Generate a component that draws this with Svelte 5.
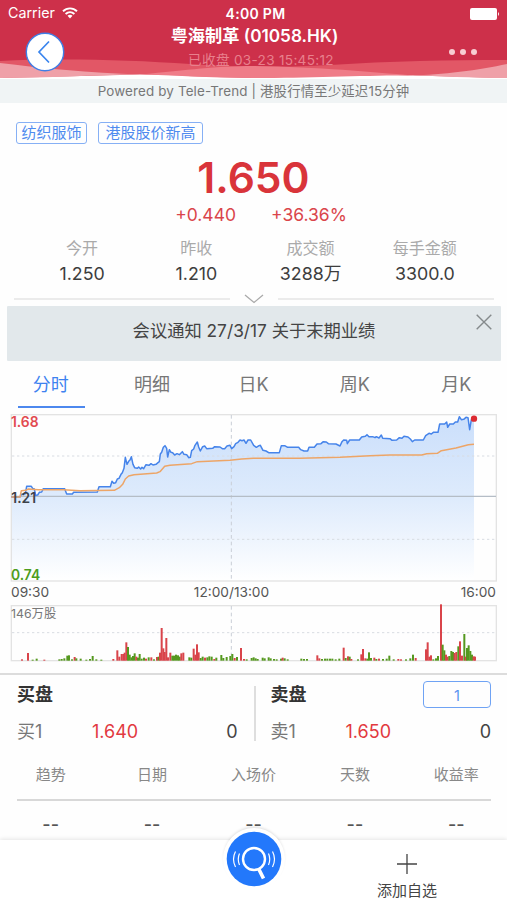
<script>
  const tags = ['纺织服饰', '港股股价新高']

  const stats = [
    { label: '今开', value: '1.250' },
    { label: '昨收', value: '1.210' },
    { label: '成交额', value: '3288万' },
    { label: '每手金额', value: '3300.0' },
  ]

  const tabs = ['分时', '明细', '日K', '周K', '月K']
  const columns = ['趋势', '日期', '入场价', '天数', '收益率']

  let activeTab = $state('分时')
  let showNotice = $state(true)

  // charts are drawn on a grid of 3 units per css pixel
  const price = [
    [34, 276], [60, 276], [64, 268], [76, 266], [80, 244], [94, 244], [98, 250], [103, 252], [107, 271],
    [113, 270], [118, 262], [125, 261], [130, 251], [194, 251], [200, 267], [217, 267], [221, 262],
    [292, 261], [297, 245], [331, 245], [336, 229], [341, 235], [347, 233], [352, 222], [357, 220],
    [363, 208], [367, 203], [372, 190], [376, 157], [381, 178], [386, 169], [390, 165], [394, 155],
    [399, 178], [404, 188], [412, 190], [416, 186], [422, 192], [426, 187], [431, 191], [438, 179],
    [447, 181], [453, 176], [459, 180], [468, 178], [474, 173], [478, 170], [481, 147], [485, 142],
    [490, 127], [495, 122], [500, 130], [503, 156], [508, 134], [513, 142], [518, 143], [524, 150],
    [531, 146], [538, 149], [547, 140], [552, 148], [560, 149], [566, 158], [571, 157], [575, 137],
    [581, 132], [585, 121], [592, 111], [596, 126], [601, 138], [608, 125], [614, 123], [620, 131],
    [638, 130], [644, 125], [660, 126], [667, 131], [674, 131], [681, 123], [690, 121], [695, 131],
    [702, 125], [707, 116], [714, 112], [720, 105], [726, 107], [732, 105], [738, 115], [744, 105],
    [752, 105], [761, 121], [769, 127], [777, 122], [781, 121], [789, 136], [798, 138], [806, 143],
    [838, 143], [844, 122], [854, 122], [863, 127], [896, 127], [902, 134], [912, 138], [923, 138],
    [927, 127], [943, 127], [951, 117], [963, 116], [970, 110], [979, 111], [985, 116], [1008, 117],
    [1020, 123], [1026, 110], [1031, 105], [1040, 106], [1042, 116], [1049, 105], [1078, 105],
    [1085, 96], [1096, 94], [1101, 89], [1107, 95], [1118, 95], [1125, 98], [1129, 95], [1137, 99],
    [1144, 90], [1148, 100], [1170, 101], [1176, 106], [1190, 105], [1198, 98], [1206, 100],
    [1212, 94], [1224, 96], [1231, 102], [1237, 110], [1244, 105], [1270, 105], [1277, 92],
    [1287, 85], [1294, 87], [1300, 82], [1314, 82], [1319, 57], [1334, 57], [1340, 51], [1343, 67],
    [1349, 57], [1360, 57], [1366, 51], [1373, 51], [1378, 35], [1384, 44], [1391, 43], [1398, 37],
    [1404, 38], [1409, 74], [1414, 44], [1422, 42],
  ]

  const average = [
    [34, 276], [60, 276], [64, 257], [78, 256], [84, 252], [115, 254], [190, 254], [240, 257],
    [343, 256], [358, 248], [368, 238], [376, 222], [386, 213], [402, 209], [470, 204], [480, 200],
    [494, 184], [510, 181], [575, 176], [592, 170], [690, 166], [725, 162], [760, 160], [900, 160],
    [1020, 157], [1110, 152], [1170, 150], [1265, 150], [1280, 146], [1312, 145], [1324, 137],
    [1368, 129], [1405, 119], [1422, 118],
  ]

  // x, height, r(ise) / f(all)
  const volume = [
    [66, 4, 'r'], [84, 23, 'r'], [98, 3, 'f'], [110, 6, 'f'], [133, 3, 'r'], [178, 4, 'f'], [185, 5, 'f'],
    [193, 7, 'f'], [202, 15, 'f'], [207, 16, 'f'], [216, 4, 'f'], [224, 11, 'r'], [229, 7, 'f'],
    [242, 6, 'f'], [259, 3, 'f'], [270, 5, 'f'], [278, 14, 'f'], [289, 4, 'f'], [304, 3, 'f'],
    [340, 5, 'r'], [352, 31, 'r'], [358, 12, 'r'], [365, 20, 'r'], [370, 20, 'r'], [374, 24, 'r'],
    [379, 55, 'r'], [384, 41, 'f'], [389, 18, 'f'], [394, 10, 'f'], [399, 14, 'f'], [404, 22, 'f'],
    [409, 12, 'r'], [414, 9, 'f'], [419, 20, 'f'], [425, 6, 'f'], [432, 9, 'f'], [438, 6, 'r'],
    [446, 10, 'f'], [454, 10, 'r'], [462, 4, 'f'], [471, 11, 'r'], [476, 12, 'f'], [480, 24, 'r'],
    [485, 98, 'r'], [490, 37, 'r'], [494, 26, 'r'], [499, 68, 'r'], [504, 10, 'r'], [511, 24, 'r'],
    [517, 15, 'f'], [522, 15, 'f'], [528, 18, 'f'], [534, 16, 'f'], [539, 12, 'f'], [544, 22, 'r'],
    [550, 24, 'r'], [568, 10, 'f'], [574, 9, 'f'], [581, 36, 'r'], [586, 18, 'r'], [591, 49, 'r'],
    [596, 25, 'r'], [602, 8, 'f'], [608, 12, 'f'], [615, 9, 'r'], [622, 10, 'f'], [628, 13, 'f'],
    [635, 12, 'f'], [643, 5, 'r'], [649, 9, 'f'], [664, 17, 'f'], [670, 8, 'f'], [680, 11, 'f'],
    [691, 14, 'f'], [697, 20, 'f'], [704, 8, 'r'], [711, 11, 'f'], [723, 38, 'r'], [732, 5, 'r'],
    [740, 4, 'f'], [755, 8, 'f'], [761, 10, 'f'], [767, 7, 'f'], [773, 5, 'f'], [788, 9, 'f'],
    [794, 7, 'f'], [806, 10, 'f'], [812, 7, 'f'], [822, 5, 'f'], [830, 4, 'f'], [843, 6, 'f'],
    [848, 9, 'r'], [854, 7, 'f'], [863, 4, 'f'], [904, 6, 'f'], [912, 5, 'f'], [921, 5, 'f'],
    [952, 16, 'r'], [958, 7, 'r'], [966, 5, 'f'], [975, 6, 'f'], [982, 6, 'f'], [990, 6, 'f'],
    [997, 6, 'f'], [1007, 4, 'f'], [1018, 6, 'f'], [1031, 39, 'r'], [1037, 8, 'f'], [1044, 13, 'r'],
    [1049, 12, 'f'], [1054, 5, 'r'], [1074, 4, 'f'], [1084, 19, 'r'], [1089, 35, 'r'], [1096, 7, 'r'],
    [1102, 6, 'f'], [1107, 25, 'f'], [1113, 8, 'f'], [1123, 9, 'r'], [1129, 5, 'f'], [1137, 6, 'r'],
    [1149, 5, 'f'], [1160, 6, 'f'], [1168, 15, 'f'], [1181, 4, 'f'], [1195, 5, 'r'], [1203, 4, 'r'],
    [1218, 4, 'f'], [1231, 7, 'f'], [1239, 18, 'f'], [1247, 8, 'r'], [1278, 34, 'r'], [1283, 55, 'r'],
    [1288, 12, 'r'], [1293, 16, 'r'], [1300, 4, 'f'], [1308, 7, 'f'], [1314, 14, 'f'], [1323, 169, 'r'],
    [1328, 48, 'f'], [1333, 31, 'f'], [1338, 18, 'r'], [1343, 12, 'r'], [1348, 14, 'f'], [1354, 29, 'f'],
    [1359, 26, 'f'], [1364, 23, 'r'], [1369, 26, 'r'], [1375, 43, 'f'], [1380, 58, 'r'], [1386, 15, 'r'],
    [1393, 80, 'f'], [1397, 12, 'r'], [1401, 38, 'f'], [1406, 46, 'f'], [1411, 29, 'f'], [1416, 18, 'f'],
    [1421, 13, 'r'], [1425, 12, 'r'],
  ]

  const toPath = (points) => 'M' + points.map((p) => p.join(' ')).join('L')
</script>

<main>
  <header>
    <svg class="waves" viewBox="0 0 507 79" preserveAspectRatio="none" aria-hidden="true">
      <path fill="#fff" d="M0 77L140 73H413L507 77V79H0Z" />
      <path fill="#e25766" d="M0 61C60 58 130 60 190 64C230 67 280 68 330 65C390 61 450 60 507 60V78L413 75.500C360 74 310 77 253 78C200 77 170 74.500 140 74.500L0 78Z" />
      <path fill="#ef7c88" d="M140 74.500C190 70 215 66 253 66C320 67 370 72 413 75.500C370 75 310 78 253 78C210 78 170 75 140 74.500Z" />
      <path fill="#efa0a8" d="M0 63C40 68 90 73 140 74.500C90 75 50 78 0 78Z" />
      <path fill="#efa0a8" d="M507 64C480 70 440 75 413 75.500C440 76 470 78 507 78Z" />
    </svg>
    <div class="status">
      <span class="carrier">
        Carrier
        <svg width="16" height="12" viewBox="0 0 16 12" fill="none" stroke="#fff" stroke-width="1.900">
          <path d="M1 4.300C5 .4 11 .4 15 4.300M3.600 7C6.200 4.600 9.800 4.600 12.400 7" />
          <path d="M5.500 8.800Q8 6.800 10.500 8.800L8 11.400Z" fill="#fff" stroke="none" />
        </svg>
      </span>
      <span class="clock">4:00 PM</span>
      <svg class="battery" width="30" height="12" viewBox="0 0 30 12" fill="#fff">
        <rect width="27" height="12" rx="2" />
        <path d="M28 4Q30 6 28 8Z" />
      </svg>
    </div>
    <div class="nav">
      <button class="back" aria-label="back">
        <svg width="40" height="40" viewBox="0 0 40 40" fill="none">
          <circle cx="20" cy="20" r="18.700" fill="#fff" stroke="#3f7ee6" stroke-width="1.400" />
          <path d="M24 9.500L14 20L24 30.500" stroke="#3a85ee" stroke-width="1.700" />
        </svg>
      </button>
      <div class="title">
        <h1>粤海制革 (01058.HK)</h1>
        <p>已收盘 03-23 15:45:12</p>
      </div>
      <button class="more" aria-label="more">
        <i></i><i></i><i></i>
      </button>
    </div>
  </header>

  <p class="powered">Powered by Tele-Trend | 港股行情至少延迟15分钟</p>

  <section class="quote">
    <div class="tags">
      {#each tags as tag}
        <span>{tag}</span>
      {/each}
    </div>
    <strong class="last">1.650</strong>
    <div class="change">
      <span>+0.440</span>
      <span>+36.36%</span>
    </div>
    <dl class="stats">
      {#each stats as stat}
        <div>
          <dt>{stat.label}</dt>
          <dd>{stat.value}</dd>
        </div>
      {/each}
    </dl>
    <div class="expand">
      <hr />
      <svg width="20" height="10" viewBox="0 0 20 10" fill="none" stroke="#aaa" stroke-width="1.300">
        <path d="M1 1L10 8.500L19 1" />
      </svg>
      <hr />
    </div>
  </section>

  {#if showNotice}
    <div class="notice">
      <span>会议通知 27/3/17 关于末期业绩</span>
      <button aria-label="close" onclick={() => (showNotice = false)}>
        <svg width="16" height="16" viewBox="0 0 16 16" stroke="#858a8c" stroke-width="1.400">
          <path d="M.7 .7L15.300 15.300M15.300 .7L.7 15.300" />
        </svg>
      </button>
    </div>
  {/if}

  <nav class="tabs">
    {#each tabs as tab}
      <button class:active={activeTab === tab} onclick={() => (activeTab = tab)}>{tab}</button>
    {/each}
  </nav>

  <section class="charts">
    <svg class="price-chart" viewBox="30 24 1464 507">
      <defs>
        <linearGradient id="fade" x1="0" y1="35" x2="0" y2="528" gradientUnits="userSpaceOnUse">
          <stop offset="0" stop-color="#cbdffb" />
          <stop offset=".5" stop-color="#deebfc" />
          <stop offset="1" stop-color="#fff" />
        </linearGradient>
      </defs>
      <path d="{toPath(price)}V528H34Z" fill="url(#fade)" />
      <rect class="frame" x="34" y="29" width="1455" height="499" />
      <path class="grid" d="M36 153H1486M36 403H1486" />
      <path class="grid mid" d="M694 30V528" />
      <path d="M34 274H1488" stroke="#b5bdc6" stroke-width="3.500" />
      <path class="line" d={toPath(price)} stroke="#4684ea" />
      <path class="line" d={toPath(average)} stroke="#eda567" />
      <circle cx="1422" cy="41" r="9.500" fill="#dc2b32" />
      <text x="33" y="66" fill="#e24a50">1.68</text>
      <text x="34" y="295" fill="#3c4148">1.21</text>
      <text x="33" y="525" fill="#4d9d1c">0.74</text>
    </svg>
    <div class="times">
      <span>09:30</span>
      <span>12:00/13:00</span>
      <span>16:00</span>
    </div>
    <svg class="volume-chart" viewBox="30 6 1464 183">
      <rect class="frame" x="34" y="17" width="1455" height="165" />
      <path class="grid" d="M36 98H1486" />
      <path class="grid mid" d="M694 18V182" />
      <text x="33" y="53" fill="#777">146万股</text>
      {#each volume as [x, height, side]}
        <rect class={side} x={x - 3} y={182 - height} width="6" {height} />
      {/each}
    </svg>
  </section>

  <section class="book">
    <div class="side">
      <h2>买盘</h2>
      <div class="row"><span>买1</span><em>1.640</em><b>0</b></div>
    </div>
    <div class="side">
      <h2>卖盘 <button>1</button></h2>
      <div class="row"><span>卖1</span><em>1.650</em><b>0</b></div>
    </div>
  </section>

  <section class="signals">
    <div class="head">
      {#each columns as column}
        <span>{column}</span>
      {/each}
    </div>
    <div class="values">
      {#each columns as column}
        <span>--</span>
      {/each}
    </div>
  </section>

  <footer>
    <div class="search">
      <svg width="62" height="62" viewBox="0 0 62 62" fill="none" stroke="#fff">
        <circle cx="31" cy="31" r="27.300" fill="#2378fb" stroke="none" />
        <circle cx="31" cy="31" r="11" stroke-width="2.400" />
        <path d="M36 41.500L40.500 50.500" stroke-width="3.600" />
        <path d="M16.500 25.500Q14 31 16.500 37M12.500 23.500Q8.500 31 12.500 39M45.500 25.500Q48 31 45.500 37M49.500 23.500Q53.500 31 49.500 39" stroke-width="1.200" />
      </svg>
    </div>
    <button class="add">
      <svg width="20" height="20" viewBox="0 0 20 20" stroke="#444" stroke-width="1.300">
        <path d="M10 0V20M0 10H20" />
      </svg>
      添加自选
    </button>
  </footer>
</main>

<style>
  :global(body) {
    margin: 0;
    background: #fefefe;
  }

  * {
    box-sizing: border-box;
    margin: 0;
    padding: 0;
  }

  main {
    display: flex;
    flex-direction: column;
    width: 507px;
    height: 900px;
    overflow: hidden;
    color: #444;
    font-family: Inter, 'Noto Sans CJK SC', sans-serif;
    font-size: 16px;
    line-height: 1;
  }

  svg {
    display: block;
  }

  button {
    border: 0;
    background: none;
    color: inherit;
    font: inherit;
    cursor: pointer;
  }

  header {
    position: relative;
    height: 79px;
    flex: none;
    background: linear-gradient(#cd304a 76px, #f0f4f5 76px);
    color: #fff;
  }

  .waves {
    position: absolute;
    inset: 0;
    width: 100%;
    height: 79px;
  }

  .status {
    position: relative;
    display: grid;
    grid-template-columns: 1fr auto 1fr;
    align-items: center;
    height: 27px;
    padding: 0 7px 0 8px;
    font-size: 14.300px;
  }

  .carrier {
    display: flex;
    align-items: center;
    gap: 7px;
  }

  .clock {
    margin-left: 3px;
    font-size: 14px;
    font-weight: 600;
    letter-spacing: 0.3px;
  }

  .battery {
    justify-self: end;
  }

  .nav {
    position: relative;
    display: grid;
    grid-template-columns: 100px 1fr 100px;
    align-items: start;
  }

  .back {
    width: 40px;
    margin: 5px 0 0 25px;
  }

  .title {
    text-align: center;
    white-space: nowrap;
  }

  h1 {
    height: 18px;
    padding-left: 2px;
    font-size: 17.200px;
    font-weight: 600;
    line-height: 18px;
  }

  .title p {
    margin-top: 8px;
    padding-left: 15px;
    color: #e8808d;
    font-size: 13.600px;
    line-height: 15px;
    letter-spacing: 0.3px;
  }

  .more {
    display: flex;
    justify-self: end;
    gap: 5px;
    margin: 22px 30px 0 0;
  }

  .more i {
    width: 6px;
    height: 6px;
    border-radius: 50%;
    background: #f7cdd2;
  }

  .powered {
    flex: none;
    height: 24px;
    background: #f0f4f5;
    color: #777;
    font-size: 13.400px;
    line-height: 25px;
    text-align: center;
    letter-spacing: 0.15px;
  }

  .quote {
    display: flex;
    flex-direction: column;
    flex: none;
    height: 203px;
    padding-top: 19px;
  }

  .tags {
    display: flex;
    gap: 11px;
    padding-left: 16px;
  }

  .tags span {
    height: 22px;
    padding: 0 4.500px;
    border: 1px solid #86b0f5;
    border-radius: 3px;
    color: #4f8bef;
    font-size: 15px;
    line-height: 20px;
  }

  .tags span + span {
    padding: 0 6.500px;
  }

  .last {
    margin-top: 13px;
    color: #d9343a;
    font-size: 42.500px;
    font-weight: 600;
    line-height: 42px;
    text-align: center;
  }

  .change {
    display: flex;
    justify-content: center;
    gap: 35px;
    margin: 5px 0 0 15px;
    color: #da454b;
    font-size: 17.500px;
    line-height: 22px;
  }

  .stats {
    display: grid;
    grid-template-columns: repeat(4, 1fr);
    margin-top: 12px;
    padding: 0 25px;
    text-align: center;
  }

  dt {
    color: #aaa;
    font-size: 16px;
    line-height: 20px;
  }

  dd {
    margin-top: 5px;
    color: #3d3d3d;
    font-size: 17.800px;
    line-height: 22px;
  }

  .expand {
    display: flex;
    align-items: center;
    justify-content: space-between;
    margin-top: 9px;
    padding: 0 13px 0 14px;
  }

  .expand hr {
    width: 216px;
    border: 0;
    border-top: 2px solid #ebebeb;
  }

  .notice {
    display: grid;
    grid-template-columns: 36px 1fr 36px;
    flex: none;
    height: 55px;
    margin: 0 6px 0 7px;
    border-radius: 1px;
    background: #e2e8eb;
    color: #444;
    font-size: 17.300px;
    line-height: 50px;
    text-align: center;
  }

  .notice span {
    grid-column: 2;
    white-space: nowrap;
  }

  .notice button {
    align-self: start;
    justify-self: end;
    margin: 8px 9px 0 0;
  }

  .tabs {
    display: grid;
    grid-template-columns: repeat(5, 1fr);
    flex: none;
    height: 47px;
  }

  .tabs button {
    position: relative;
    color: #777;
    font-size: 18px;
    line-height: 47px;
  }

  .tabs .active {
    color: #3d82f0;
  }

  .tabs .active::after {
    content: '';
    position: absolute;
    right: 16.500px;
    bottom: 0;
    left: 17.500px;
    height: 2px;
    background: #4c88ee;
  }

  .charts {
    flex: none;
    height: 267px;
    padding: 5px 9px 0 10px;
    border-bottom: 2px solid #dcdcdc;
  }

  .price-chart {
    width: 488px;
    height: 169px;
  }

  .volume-chart {
    width: 488px;
    height: 61px;
  }

  .charts text {
    font-size: 41.500px;
    font-weight: 600;
  }

  .volume-chart text {
    font-size: 37px;
    font-weight: 400;
  }

  .frame {
    fill: none;
    stroke: #e3e3e3;
    stroke-width: 4;
  }

  .grid {
    fill: none;
    stroke: #d8dce2;
    stroke-width: 3;
    stroke-dasharray: 7 8;
  }

  .mid {
    stroke: #c9ced6;
    stroke-dasharray: 11 9;
  }

  .line {
    fill: none;
    stroke-width: 4.500;
    stroke-linejoin: round;
  }

  .r {
    fill: #d9444a;
  }

  .f {
    fill: #55981f;
  }

  .times {
    display: grid;
    grid-template-columns: 100px 1fr 100px;
    height: 20px;
    padding: 0 2px 0 1px;
    color: #555;
    font-size: 13.700px;
    line-height: 20px;
  }

  .times span:nth-child(2) {
    margin-right: 44px;
    text-align: center;
  }

  .times span:last-child {
    text-align: right;
  }

  .book {
    display: grid;
    grid-template-columns: 1fr 1fr;
    flex: none;
    height: 68px;
    padding-top: 6px;
  }

  .side {
    padding: 0 16px 0 17px;
  }

  .side + .side {
    position: relative;
  }

  .side + .side::before {
    content: '';
    position: absolute;
    top: 5px;
    left: 0;
    width: 2px;
    height: 55px;
    background: #dedede;
  }

  h2 {
    display: flex;
    justify-content: space-between;
    height: 27px;
    color: #333;
    font-size: 18px;
    font-weight: 600;
    line-height: 28px;
  }

  h2 button {
    width: 68px;
    border: 1.500px solid #6fa3f4;
    border-radius: 4px;
    color: #5a92f0;
    font-size: 14.500px;
    font-weight: 400;
  }

  .row {
    display: grid;
    grid-template-columns: 75px 1fr auto;
    margin-top: 13px;
    color: #777;
    font-size: 18px;
    line-height: 22px;
  }

  .row em {
    color: #e2393f;
    font-style: normal;
  }

  .row b {
    color: #444;
    font-weight: 400;
  }

  .signals {
    flex: 1;
    min-height: 0;
  }

  .head,
  .values {
    display: grid;
    grid-template-columns: repeat(5, 1fr);
    text-align: center;
  }

  .head {
    position: relative;
    height: 57px;
    color: #888;
    font-size: 15px;
    line-height: 64px;
  }

  .head::after {
    content: '';
    position: absolute;
    right: 16px;
    bottom: -1px;
    left: 17px;
    height: 2px;
    background: #d8d8d8;
  }

  .values {
    height: 40px;
    color: #555;
    font-size: 18px;
    font-weight: 500;
    line-height: 49px;
  }

  footer {
    position: relative;
    flex: none;
    height: 60px;
    background: #fff;
    box-shadow: 0 -1px 4px rgba(0, 0, 0, 0.1);
  }

  .search {
    position: absolute;
    top: -12px;
    left: 223px;
    border-radius: 50%;
    background: #fff;
    box-shadow: 0 -2px 3px -1px rgba(0, 0, 0, 0.14);
  }

  .add {
    display: flex;
    flex-direction: column;
    align-items: center;
    gap: 8px;
    width: 200px;
    margin-left: 307px;
    padding-top: 14px;
    color: #444;
    font-size: 15px;
    line-height: 18px;
  }
</style>
